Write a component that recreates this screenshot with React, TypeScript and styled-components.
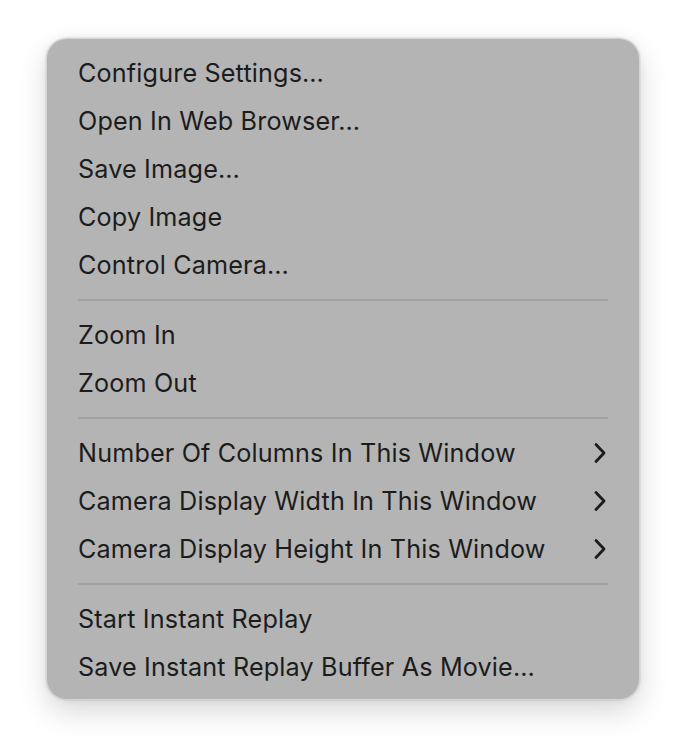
import React from "react";
import styled, { createGlobalStyle } from "styled-components";

const Global = createGlobalStyle`
  html, body { margin: 0; padding: 0; background: #ffffff; }
  body { font-family: Inter, "Noto Sans", "Liberation Sans", sans-serif; }
`;

const Page = styled.div`
  width: 686px;
  height: 754px;
  box-sizing: border-box;
  padding: 39px 0 0 47px;
`;

const Menu = styled.div`
  width: 592px;
  height: 660px;
  box-sizing: border-box;
  background: #b4b4b4;
  border-radius: 20px;
  padding: 10px 31px 8px 31px;
  display: flex;
  flex-direction: column;
  box-shadow: 0 0 0 1px #d4d4d4, 0 0 0 2px rgba(0,0,0,0.05), 0 12px 30px rgba(0,0,0,0.16), 0 0 10px rgba(0,0,0,0.07);
`;

const Item = styled.div`
  height: 48px;
  display: flex;
  align-items: center;
  justify-content: space-between;
  font-size: 25.2px;
  color: #1c1c1c;
  letter-spacing: 0.15px;
`;

const Sep = styled.div`
  height: 22px;
  display: flex;
  align-items: center;
  &::after {
    content: "";
    display: block;
    width: 100%;
    height: 2px;
    background: #a2a2a2;
  }
`;

const Chevron = () => (
  <svg width="14" height="22" viewBox="0 0 14 22" style={{ marginRight: 1 }}>
    <path d="M3 2.5 L11 11 L3 19.5" fill="none" stroke="#1c1c1c" strokeWidth="2.8" strokeLinecap="round" strokeLinejoin="round" />
  </svg>
);

type Entry = { label: string; sub?: boolean } | "sep";

const entries: Entry[] = [
  { label: "Configure Settings…" },
  { label: "Open In Web Browser…" },
  { label: "Save Image…" },
  { label: "Copy Image" },
  { label: "Control Camera…" },
  "sep",
  { label: "Zoom In" },
  { label: "Zoom Out" },
  "sep",
  { label: "Number Of Columns In This Window", sub: true },
  { label: "Camera Display Width In This Window", sub: true },
  { label: "Camera Display Height In This Window", sub: true },
  "sep",
  { label: "Start Instant Replay" },
  { label: "Save Instant Replay Buffer As Movie…" },
];

export default function App() {
  return (
    <>
      <Global />
      <Page>
        <Menu>
          {entries.map((e, i) =>
            e === "sep" ? (
              <Sep key={i} />
            ) : (
              <Item key={i}>
                <span>{e.label}</span>
                {e.sub && <Chevron />}
              </Item>
            )
          )}
        </Menu>
      </Page>
    </>
  );
}
